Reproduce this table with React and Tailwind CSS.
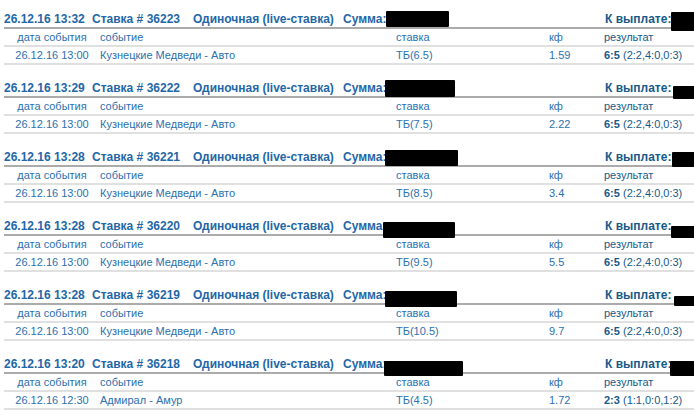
const bets = [
  {
    placed: "26.12.16 13:32",
    id: "36223",
    event: "26.12.16 13:00",
    match: "Кузнецкие Медведи - Авто",
    stake: "ТБ(6.5)",
    kf: "1.59",
    score: "6:5",
    detail: "(2:2,4:0,0:3)",
    sumBox: "left-[382px] top-[1px] w-[63px] h-[16px]",
    payBox: "left-[667px] top-[2px] w-[27px] h-[19px]",
  },
  {
    placed: "26.12.16 13:29",
    id: "36222",
    event: "26.12.16 13:00",
    match: "Кузнецкие Медведи - Авто",
    stake: "ТБ(7.5)",
    kf: "2.22",
    score: "6:5",
    detail: "(2:2,4:0,0:3)",
    sumBox: "left-[381px] top-[1px] w-[70px] h-[17px]",
    payBox: "left-[669px] top-[7px] w-[25px] h-[13px]",
  },
  {
    placed: "26.12.16 13:28",
    id: "36221",
    event: "26.12.16 13:00",
    match: "Кузнецкие Медведи - Авто",
    stake: "ТБ(8.5)",
    kf: "3.4",
    score: "6:5",
    detail: "(2:2,4:0,0:3)",
    sumBox: "left-[381px] top-[2px] w-[73px] h-[16px]",
    payBox: "left-[668px] top-[4px] w-[26px] h-[15px]",
  },
  {
    placed: "26.12.16 13:28",
    id: "36220",
    event: "26.12.16 13:00",
    match: "Кузнецкие Медведи - Авто",
    stake: "ТБ(9.5)",
    kf: "5.5",
    score: "6:5",
    detail: "(2:2,4:0,0:3)",
    sumBox: "left-[379px] top-[5px] w-[72px] h-[16px]",
    payBox: "left-[667px] top-[9px] w-[27px] h-[12px]",
  },
  {
    placed: "26.12.16 13:28",
    id: "36219",
    event: "26.12.16 13:00",
    match: "Кузнецкие Медведи - Авто",
    stake: "ТБ(10.5)",
    kf: "9.7",
    score: "6:5",
    detail: "(2:2,4:0,0:3)",
    sumBox: "left-[381px] top-[5px] w-[72px] h-[16px]",
    payBox: "left-[670px] top-[10px] w-[24px] h-[10px]",
  },
  {
    placed: "26.12.16 13:20",
    id: "36218",
    event: "26.12.16 12:30",
    match: "Адмирал - Амур",
    stake: "ТБ(4.5)",
    kf: "1.72",
    score: "2:3",
    detail: "(1:1,0:0,1:2)",
    sumBox: "left-[380px] top-[6px] w-[79px] h-[15px]",
    payBox: "left-[666px] top-[6px] w-[28px] h-[15px]",
  },
];

const cols = "grid grid-cols-[96px_296px_153px_55px_1fr]";

const BetBlock = ({ bet }) => (
  <div className="mb-[14px] ml-[4px]">
    {/* Header */}
    <div className="relative flex items-end h-[19px] pb-[2px] border-b-2 border-[#ababab] font-bold text-[12px] text-[#1f67a7]">
      <span className="w-[88px] shrink-0">{bet.placed}</span>
      <span className="w-[101px] shrink-0">Ставка # {bet.id}</span>
      <span className="w-[150px] shrink-0">Одиночная (live-ставка)</span>
      <span className="w-[262px] shrink-0">Сумма:</span>
      <span className="text-[#165a8a]">К выплате:</span>
      <span className={`absolute bg-black rounded-[1px] ${bet.sumBox}`} />
      <span className={`absolute bg-black rounded-[1px] ${bet.payBox}`} />
    </div>

    {/* Column labels */}
    <div className={`${cols} items-center h-[18px] border-b-2 border-[#e0e0e0] text-[11px] text-[#2c70ae]`}>
      <span className="text-center">дата события</span>
      <span>событие</span>
      <span>ставка</span>
      <span>кф</span>
      <span className="text-[#165a8a]">результат</span>
    </div>

    {/* Bet row */}
    <div className={`${cols} items-center h-[18px] border-b-2 border-[#e0e0e0] text-[11px] text-[#2c70ae]`}>
      <span className="text-center">{bet.event}</span>
      <span>{bet.match}</span>
      <span>{bet.stake}</span>
      <span>{bet.kf}</span>
      <span className="text-[#165a8a] whitespace-nowrap">
        <b>{bet.score}</b> {bet.detail}
      </span>
    </div>
  </div>
);

export default function App() {
  return (
    <div className="w-[694px] h-[419px] overflow-hidden bg-white pt-[10px] font-['Liberation_Sans',Arial,sans-serif] leading-none">
      {bets.map((bet) => (
        <BetBlock key={bet.id} bet={bet} />
      ))}
    </div>
  );
}
